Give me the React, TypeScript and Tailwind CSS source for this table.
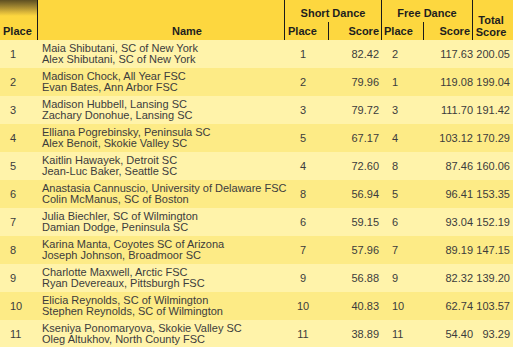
import React from "react";

const rows = [
  ["1", "Maia Shibutani, SC of New York", "Alex Shibutani, SC of New York", "1", "82.42", "2", "117.63", "200.05"],
  ["2", "Madison Chock, All Year FSC", "Evan Bates, Ann Arbor FSC", "2", "79.96", "1", "119.08", "199.04"],
  ["3", "Madison Hubbell, Lansing SC", "Zachary Donohue, Lansing SC", "3", "79.72", "3", "111.70", "191.42"],
  ["4", "Elliana Pogrebinsky, Peninsula SC", "Alex Benoit, Skokie Valley SC", "5", "67.17", "4", "103.12", "170.29"],
  ["5", "Kaitlin Hawayek, Detroit SC", "Jean-Luc Baker, Seattle SC", "4", "72.60", "8", "87.46", "160.06"],
  ["6", "Anastasia Cannuscio, University of Delaware FSC", "Colin McManus, SC of Boston", "8", "56.94", "5", "96.41", "153.35"],
  ["7", "Julia Biechler, SC of Wilmington", "Damian Dodge, Peninsula SC", "6", "59.15", "6", "93.04", "152.19"],
  ["8", "Karina Manta, Coyotes SC of Arizona", "Joseph Johnson, Broadmoor SC", "7", "57.96", "7", "89.19", "147.15"],
  ["9", "Charlotte Maxwell, Arctic FSC", "Ryan Devereaux, Pittsburgh FSC", "9", "56.88", "9", "82.32", "139.20"],
  ["10", "Elicia Reynolds, SC of Wilmington", "Stephen Reynolds, SC of Wilmington", "10", "40.83", "10", "62.74", "103.57"],
  ["11", "Kseniya Ponomaryova, Skokie Valley SC", "Oleg Altukhov, North County FSC", "11", "38.89", "11", "54.40", "93.29"],
];

export default function App() {
  return (
    <div
      className="w-[513px] h-[347px] overflow-hidden bg-[#fff3aa] text-[11px] text-[#3c3c3c]"
      style={{ fontFamily: '"Liberation Sans", Arial, sans-serif' }}
    >
      {/* Header */}
      <div className="flex h-[40px] bg-[#fdd73f] font-bold text-[#1e1e1e] leading-[13px]">
        <div className="w-[38px] border-r border-[#1a1a1a] bg-gradient-to-b from-[#5e4f22] via-[#d9b53a] via-[30%] to-[#fdd73f] to-[40%] flex items-end pl-[3px] pb-[2px]">
          Place
        </div>
        <div className="w-[247px] border-r border-[#1a1a1a] flex items-end pl-[134px] pb-[2px]">
          Name
        </div>
        <div className="w-[97px] border-r border-[#1a1a1a] flex flex-col">
          <div className="h-[22px] flex items-center justify-center pt-[4px]">Short Dance</div>
          <div className="flex flex-1">
            <div className="w-[44px] border-r border-[#1a1a1a] flex items-end pl-[3px] pb-[2px]">Place</div>
            <div className="flex-1 flex items-end justify-end pr-[2px] pb-[2px]">Score</div>
          </div>
        </div>
        <div className="w-[91px] border-r border-[#1a1a1a] flex flex-col">
          <div className="h-[22px] flex items-center justify-center pt-[4px]">Free Dance</div>
          <div className="flex flex-1">
            <div className="w-[42px] border-r border-[#1a1a1a] flex items-end pl-[2px] pb-[2px]">Place</div>
            <div className="flex-1 flex items-end justify-end pr-[2px] pb-[2px]">Score</div>
          </div>
        </div>
        <div className="flex-1 flex flex-col items-center justify-end pb-[2px] pr-[4px] leading-[12px]">
          <span>Total</span>
          <span>Score</span>
        </div>
      </div>

      {/* Body */}
      {rows.map((r, i) => (
        <div
          key={i}
          className={`flex h-[28px] items-center ${i % 2 === 0 ? "bg-[#fff3aa]" : "bg-[#fdeb86]"}`}
        >
          <div className="w-[38px] pl-[10px]">{r[0]}</div>
          <div className="w-[246px] pl-[4px] leading-[11px] whitespace-nowrap">
            <div>{r[1]}</div>
            <div>{r[2]}</div>
          </div>
          <div className="w-[38px] text-center">{r[3]}</div>
          <div className="w-[58px] text-right pr-[1px]">{r[4]}</div>
          <div className="w-[43px] pl-[12px]">{r[5]}</div>
          <div className="w-[51px] text-right pr-[1px]">{r[6]}</div>
          <div className="flex-1 text-right pr-[3px]">{r[7]}</div>
        </div>
      ))}
    </div>
  );
}
